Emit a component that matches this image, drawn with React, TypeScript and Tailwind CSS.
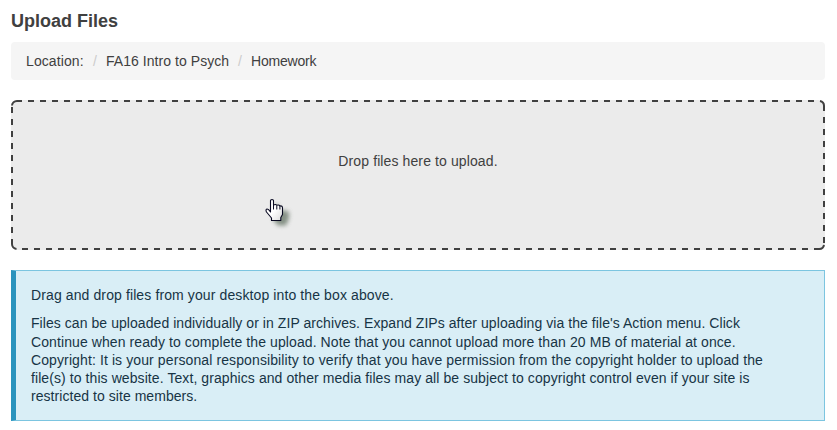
function DashedOutline() {
  return (
    <svg
      className="pointer-events-none absolute inset-0"
      width="814"
      height="150"
      viewBox="0 0 814 150"
      fill="none"
      stroke="#404040"
      strokeWidth="2"
    >
      <path d="M17 1H804" strokeDasharray="6 6" />
      <path d="M11 149H798" strokeDasharray="6 6" />
      <path d="M1 7V134" strokeDasharray="6 6" />
      <path d="M813 17V143.5" strokeDasharray="6 6" />
      <path d="M1 5.5A5 5 0 0 1 6 1H11" />
      <path d="M809 1A5 5 0 0 1 813 6V11" />
      <path d="M813 145A5 5 0 0 1 808 149H803" />
      <path d="M1 139V144A5 5 0 0 0 5.5 149" />
    </svg>
  );
}

function HandCursor() {
  return (
    <svg className="absolute left-[251px] top-[94px]" width="32" height="38" viewBox="0 0 32 38">
      <defs>
        <filter id="soft" x="-50%" y="-50%" width="200%" height="200%">
          <feGaussianBlur stdDeviation="2" />
        </filter>
        <linearGradient id="skin" x1="0" y1="0" x2="1" y2="1">
          <stop offset="0.5" stopColor="#fff" />
          <stop offset="1" stopColor="#dcdcdc" />
        </linearGradient>
      </defs>
      <path
        d="M12 9L14 9V15L25 17V24L22 31H14L9 25Z"
        transform="translate(2 0.5)"
        fill="#5c6c5c"
        opacity="0.7"
        filter="url(#soft)"
      />
      <path
        d="M8.5 18V6.5Q8.5 5.5 10 5.5Q11.5 5.5 11.5 6.5V11Q13.8 9.8 14.8 11.3Q17 10.5 18 12Q20.5 11.5 20.5 14V20.5L18.8 23.5V26.5H9.5V24L4.5 18Q3.3 15.5 5 15Q6.5 14.8 8.5 18Z"
        fill="url(#skin)"
        stroke="#080820"
        strokeWidth="1.1"
        strokeLinejoin="round"
      />
      <path d="M11.5 11V15.5M14.8 11.5V15.5M17.9 12V15.5" stroke="#080820" strokeWidth="1" />
    </svg>
  );
}

export default function App() {
  return (
    <main className="h-[430px] w-[837px] overflow-hidden bg-white pl-[11px] pt-[9px] font-['Liberation_Sans',Arial,sans-serif] text-sm text-[#404040]">
      <h1 className="h-[33px] text-lg leading-6 font-bold">Upload Files</h1>
      <nav className="flex h-[38px] w-[814px] items-center rounded bg-[#f5f5f5] pl-[15px]">
        <span className="w-[58px] tracking-[0.1px]">Location:</span>
        <span className="w-[22px] text-center text-[#cccccc]">/</span>
        <span className="w-[123px] tracking-[0.05px] whitespace-nowrap">FA16 Intro to Psych</span>
        <span className="w-[22px] text-center text-[#cccccc]">/</span>
        <span className="tracking-[-0.2px]">Homework</span>
      </nav>
      <section className="relative mt-5 h-[150px] w-[814px] rounded-md bg-[#ebebeb] pt-[51px] text-center leading-5">
        <DashedOutline />
        <p className="tracking-[0.11px]">Drop files here to upload.</p>
        <HandCursor />
      </section>
      <section className="mt-5 h-[151px] w-[814px] border border-l-[5px] border-[#7cc5e0] border-l-[#2a93bd] bg-[#d9eef6] pl-[15px] pt-[15px] leading-[18px] whitespace-nowrap text-[#173445]">
        <p className="tracking-[0.11px]">Drag and drop files from your desktop into the box above.</p>
        <p className="mt-[10px]">
          <span className="block h-[19px] tracking-[0.06px]">
            Files can be uploaded individually or in ZIP archives. Expand ZIPs after uploading via the file's Action menu. Click
          </span>
          <span className="block tracking-[0.09px]">
            Continue when ready to complete the upload. Note that you cannot upload more than 20 MB of material at once.
          </span>
          <span className="block tracking-[0.108px]">
            Copyright: It is your personal responsibility to verify that you have permission from the copyright holder to upload the
          </span>
          <span className="block tracking-[0.082px]">
            file(s) to this website. Text, graphics and other media files may all be subject to copyright control even if your site is
          </span>
          <span className="block tracking-[0.05px]">restricted to site members.</span>
        </p>
      </section>
    </main>
  );
}
